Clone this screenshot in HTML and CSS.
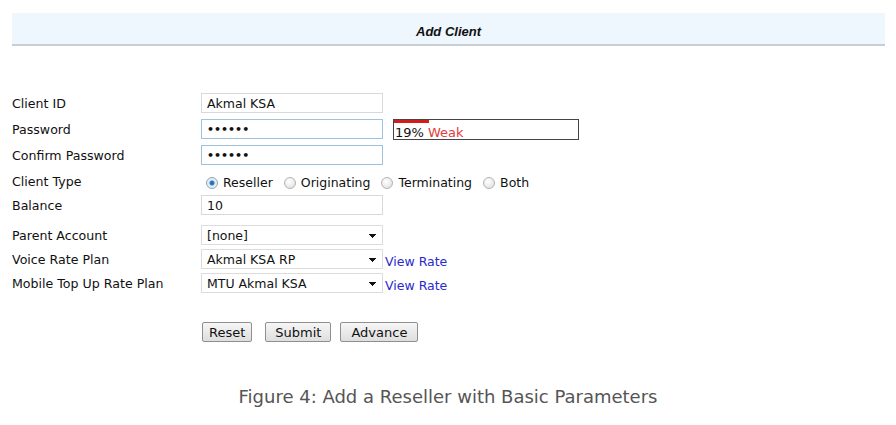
FILE: index.html
```html
<!DOCTYPE html>
<html>
  <head>
    <meta charset="utf-8">
    <title>Add Client</title>
    <link rel="stylesheet" href="styles.css">
  </head>
  <body>
    <div class="panel">
      <h2 class="panel_title">Add Client</h2>

      <form class="client_form">
        <div class="row row_first">
          <label for="client_id">Client ID</label>
          <input class="field" type="text" id="client_id" value="Akmal KSA">
        </div>
        <div class="row">
          <label for="password">Password</label>
          <input class="field field_active" type="password" id="password" value="secret">
          <div class="strength">
            <span class="strength_bar" style="width: 19%"></span>
            19% <span class="strength_weak">Weak</span>
          </div>
        </div>
        <div class="row">
          <label for="confirm">Confirm Password</label>
          <input class="field field_active" type="password" id="confirm" value="secret">
        </div>
        <div class="row row_radio">
          <label>Client Type</label>
          <div class="radios">
            <label><input type="radio" name="type" checked> Reseller</label>
            <label><input type="radio" name="type"> Originating</label>
            <label><input type="radio" name="type"> Terminating</label>
            <label><input type="radio" name="type"> Both</label>
          </div>
        </div>
        <div class="row">
          <label for="balance">Balance</label>
          <input class="field" type="text" id="balance" value="10">
        </div>

        <div class="row row_gap">
          <label for="parent">Parent Account</label>
          <select class="field" id="parent"><option>[none]</option></select>
        </div>
        <div class="row row_tight">
          <label for="voice">Voice Rate Plan</label>
          <select class="field" id="voice"><option>Akmal KSA RP</option></select>
          <a class="view_rate" href="#">View Rate</a>
        </div>
        <div class="row row_tight">
          <label for="mtu">Mobile Top Up Rate Plan</label>
          <select class="field" id="mtu"><option>MTU Akmal KSA</option></select>
          <a class="view_rate" href="#">View Rate</a>
        </div>

        <div class="buttons">
          <button type="reset">Reset</button>
          <button type="button">Submit</button>
          <button type="button">Advance</button>
        </div>
      </form>
    </div>

    <p class="caption">Figure 4: Add a Reseller with Basic Parameters</p>
  </body>
</html>
```

FILE: styles.css
```css
body {
  margin: 0;
  font-family: "DejaVu Sans", Verdana, sans-serif;
  color: #111;
  background: #fff;
}

.panel {
  padding: 13px 11px 0 12px;
}

.panel_title {
  margin: 0;
  height: 31px;
  line-height: 38px;
  text-align: center;
  font-family: "Liberation Sans", Arial, sans-serif;
  font-size: 13px;
  font-weight: bold;
  font-style: italic;
  background-color: #eef7fe;
  border-bottom: 2px solid #c9ced3;
}

.client_form {
  font-size: 12.6px;
}

.row {
  display: flex;
  align-items: center;
  height: 20px;
  margin-top: 6px;
}
.row_first {
  margin-top: 47px;
}
.row_gap {
  margin-top: 10px;
}
.row_tight {
  margin-top: 4px;
}
.row_radio {
  height: 24px;
  margin-top: 4px;
  margin-bottom: -4px;
}

.row > label {
  width: 189px;
  flex: none;
}

.field {
  box-sizing: border-box;
  width: 182px;
  height: 20px;
  margin: 0;
  padding: 0 5px;
  border: 1px solid #d6dadd;
  font-family: inherit;
  font-size: 12.5px;
  color: #111;
  background: #fff;
  outline: none;
}
.field_active {
  border-color: #9cc2de;
}
input[type=password].field {
  font-size: 11px;
  font-weight: bold;
}

select.field {
  appearance: none;
  -webkit-appearance: none;
  background-image: linear-gradient(45deg, transparent 50%, #111 50%),
    linear-gradient(135deg, #111 50%, transparent 50%);
  background-position: 167px 8px, 171px 8px;
  background-size: 4px 4px, 4px 4px;
  background-repeat: no-repeat;
  border-color: #dcdcdc;
}

.strength {
  position: relative;
  box-sizing: border-box;
  width: 186px;
  height: 21px;
  margin-left: 10px;
  padding: 6px 0 0 1px;
  border: 1px solid #444;
  font-size: 13px;
  line-height: 14px;
  color: #111;
}
.strength_bar {
  position: absolute;
  top: 0;
  left: 0;
  height: 3px;
  background: #d71a1a;
}
.strength_weak {
  color: #e33b3b;
}

.radios {
  display: flex;
  align-items: center;
  font-size: 12.5px;
}
.radios label {
  display: flex;
  align-items: center;
  margin-right: 6px;
  margin-top: 3px;
}
.radios input {
  appearance: none;
  -webkit-appearance: none;
  width: 12px;
  height: 12px;
  margin: 0 5px 0 5px;
  border: 1px solid #b3b3b3;
  border-radius: 50%;
  background: radial-gradient(circle at 40% 35%, #fff, #dcdcdc);
}
.radios input:checked {
  border-color: #8ea3b5;
  background: radial-gradient(circle, #1f66a8 0, #2e7fc4 2px, #dfe8ef 3px, #f4f7f9 6px);
}

.view_rate {
  margin: 5px 0 0 2px;
  color: #2a2ad0;
  text-decoration: none;
  font-size: 12.5px;
}

.buttons {
  display: flex;
  margin: 29px 0 0 190px;
}
.buttons button {
  height: 20px;
  margin-right: 13px;
  padding: 0 6px;
  border: 1px solid #8f8f8f;
  border-radius: 2px;
  background: linear-gradient(#f6f6f6, #dedede);
  font-family: inherit;
  font-size: 13px;
  color: #111;
}
.buttons button:nth-child(2) {
  margin-right: 9px;
  padding: 0 9px;
}
.buttons button:nth-child(3) {
  padding: 0 10px;
}

.caption {
  margin: 44px 0 0;
  text-align: center;
  font-size: 18px;
  color: #555;
}
```
